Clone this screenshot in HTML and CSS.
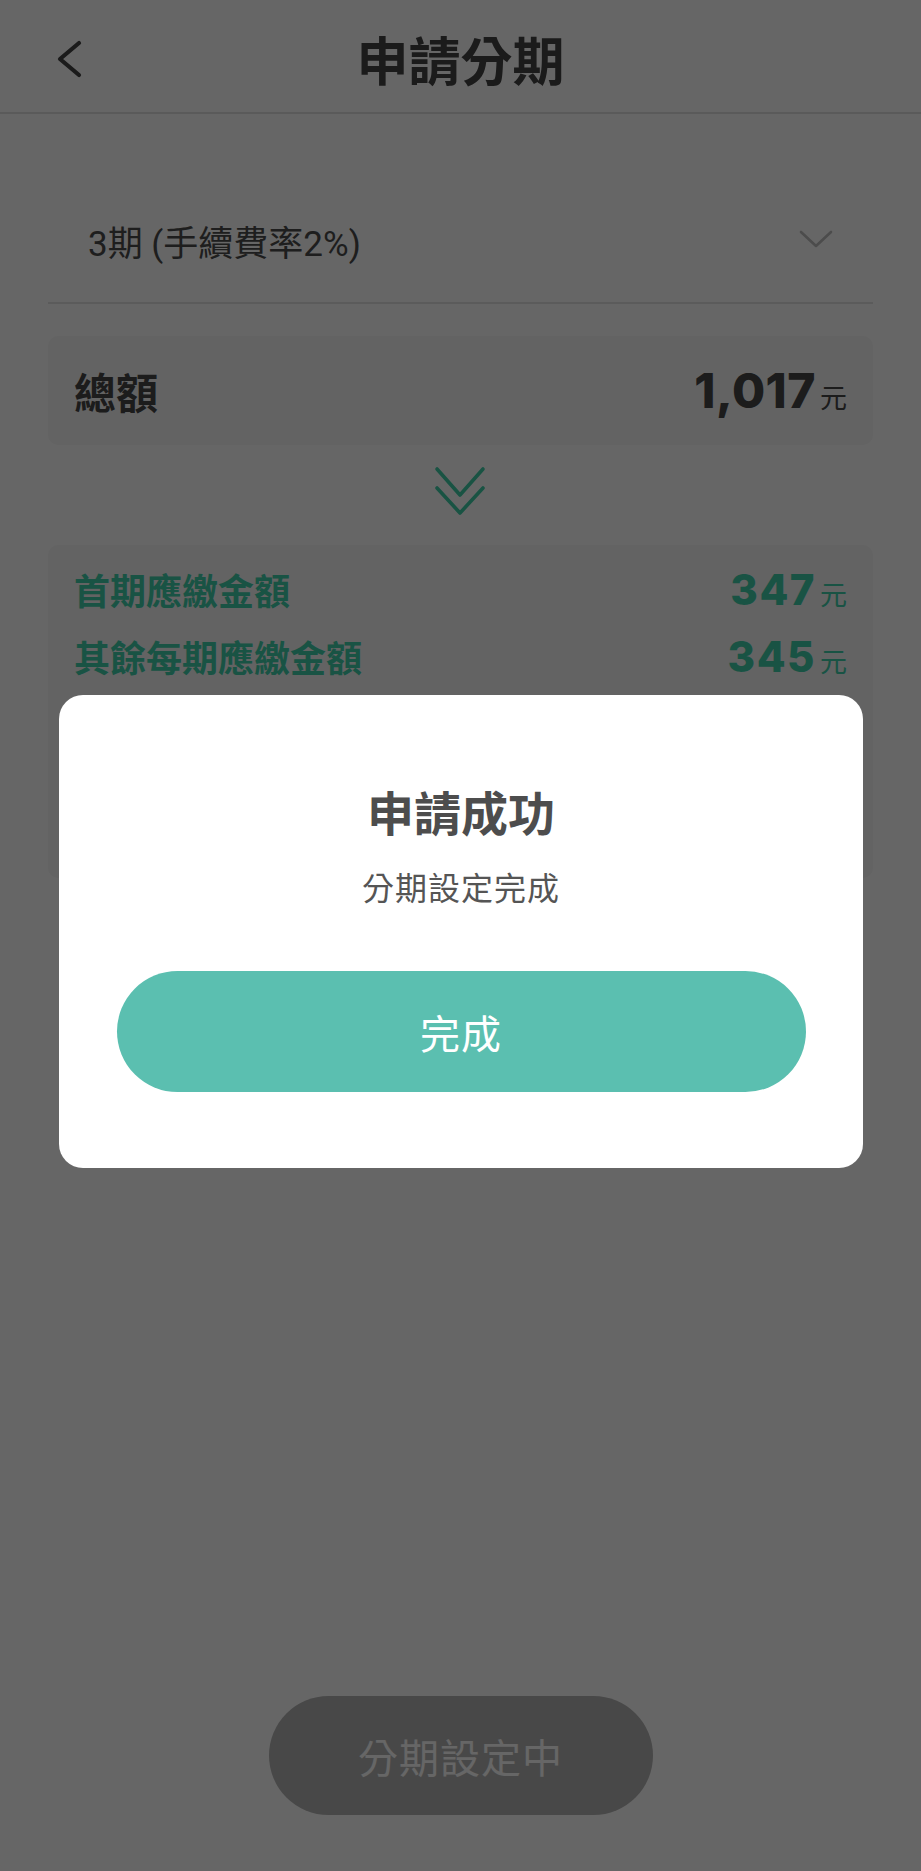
FILE: index.html
```html
<!DOCTYPE html>
<html lang="zh-Hant">
<head>
<meta charset="utf-8">
<title>申請分期</title>
<link rel="stylesheet" href="styles.css">
</head>
<body>
<div class="page">
  <header class="topbar">
    <div class="topbar-left">
      <svg class="back-icon" width="30" height="40" viewBox="0 0 30 40" aria-hidden="true">
        <polyline points="25,4 6,20 25,36" fill="none" stroke="#444" stroke-width="4.2" stroke-linecap="round" stroke-linejoin="round"/>
      </svg>
    </div>
    <h1 class="topbar-title">申請分期</h1>
    <div class="topbar-right"></div>
  </header>

  <main class="content">
    <div class="select">
      <span class="select-text">3期 (手續費率2%)</span>
      <svg class="select-caret" width="34" height="20" viewBox="0 0 34 20" aria-hidden="true">
        <polyline points="2,3 17,17 32,3" fill="none" stroke="#bdbdbd" stroke-width="2.6" stroke-linecap="round" stroke-linejoin="round"/>
      </svg>
    </div>

    <section class="card card-total">
      <span class="total-label">總額</span>
      <span class="amount amount-dark"><span class="num num-lg">1,017</span><span class="unit">元</span></span>
    </section>

    <div class="arrow">
      <svg width="52" height="50" viewBox="0 0 52 50" aria-hidden="true">
        <polyline points="3,3 26,29 49,3" fill="none" stroke="#3fcfa9" stroke-width="3.6" stroke-linecap="round" stroke-linejoin="round"/>
        <polyline points="3,22 26,47 49,22" fill="none" stroke="#3fcfa9" stroke-width="3.6" stroke-linecap="round" stroke-linejoin="round"/>
      </svg>
    </div>

    <section class="card card-result">
      <div class="row">
        <span class="row-label">首期應繳金額</span>
        <span class="amount amount-green"><span class="num num-md">347</span><span class="unit">元</span></span>
      </div>
      <div class="row">
        <span class="row-label">其餘每期應繳金額</span>
        <span class="amount amount-green"><span class="num num-md">345</span><span class="unit">元</span></span>
      </div>
    </section>
  </main>

  <footer class="footer">
    <button class="btn-pending" type="button">分期設定中</button>
  </footer>
</div>

<div class="overlay">
  <div class="modal">
    <h2 class="modal-title">申請成功</h2>
    <p class="modal-text">分期設定完成</p>
    <button class="btn-done" type="button">完成</button>
  </div>
</div>
</body>
</html>
```

FILE: styles.css
```css
* {
  box-sizing: border-box;
}

html, body {
  margin: 0;
  padding: 0;
}

body {
  background: #ffffff;
  font-family: "Noto Sans CJK TC", "Noto Sans", sans-serif;
  color: #444;
}

.page {
  min-height: 100vh;
  display: flex;
  flex-direction: column;
}

/* Header */
.topbar {
  height: 114px;
  display: grid;
  grid-template-columns: 1fr auto 1fr;
  align-items: start;
  border-bottom: 2px solid #e2e2e2;
}

.topbar-left {
  padding-left: 54px;
  padding-top: 39px;
  display: flex;
}

.back-icon {
  display: block;
}

.topbar-title {
  margin: 0;
  padding-top: 25px;
  font-size: 52px;
  line-height: 68px;
  font-weight: 700;
  color: #454545;
  letter-spacing: 0;
}

/* Content */
.content {
  display: flex;
  flex-direction: column;
  padding: 0 48px;
}

.select {
  display: flex;
  align-items: center;
  justify-content: space-between;
  padding: 107px 40px 33px 40px;
  border-bottom: 2px solid #e4e4e4;
}

.select-text {
  font-family: "Roboto", "Noto Sans CJK TC", sans-serif;
  font-size: 35px;
  line-height: 48px;
  color: #4c4c4c;
}

.select-caret {
  display: block;
  margin-bottom: 12px;
}

.card {
  background: #f7f7f7;
  border-radius: 10px;
}

.card-total {
  margin-top: 32px;
  height: 109px;
  display: flex;
  align-items: center;
  justify-content: space-between;
  padding: 0 26px 0 26px;
}

.total-label {
  font-size: 42px;
  font-weight: 700;
  color: #464646;
  line-height: 56px;
}

.amount {
  display: flex;
  align-items: baseline;
}

.num {
  font-family: "Inter", "Lato", sans-serif;
  font-weight: 800;
}

.num-lg {
  font-size: 48px;
  letter-spacing: 0.5px;
}

.num-md {
  font-size: 42px;
  letter-spacing: 1.5px;
}

.unit {
  font-size: 27px;
  margin-left: 4px;
}

.amount-dark {
  color: #464646;
}

.amount-green {
  color: #40cfaa;
}

.arrow {
  display: flex;
  justify-content: center;
  padding: 21px 2px 29px 0;
}

.arrow svg {
  display: block;
}

.card-result {
  height: 333px;
  padding: 19px 26px 0 26px;
  display: flex;
  flex-direction: column;
  gap: 17px;
}

.row {
  display: flex;
  align-items: baseline;
  justify-content: space-between;
  height: 50px;
}

.row-label {
  font-size: 36px;
  font-weight: 700;
  color: #40cfaa;
  line-height: 50px;
}

/* Footer */
.footer {
  margin-top: auto;
  display: flex;
  justify-content: center;
  padding: 0 0 56px 0;
}

.btn-pending {
  width: 384px;
  height: 119px;
  border: none;
  border-radius: 60px;
  background: #b4b4b4;
  color: #ffffff;
  font-family: "Noto Sans CJK TC", sans-serif;
  font-size: 40px;
  letter-spacing: 1px;
}

/* Modal overlay */
.overlay {
  position: fixed;
  inset: 0;
  background: rgba(0, 0, 0, 0.6);
  display: flex;
  align-items: center;
  justify-content: center;
  padding-bottom: 8px;
}

.modal {
  width: 804px;
  height: 473px;
  background: #ffffff;
  border-radius: 24px;
  display: flex;
  flex-direction: column;
  align-items: center;
  padding: 86px 57px 76px 58px;
}

.modal-title {
  margin: 0;
  font-size: 47px;
  line-height: 60px;
  font-weight: 700;
  color: #4d4d4d;
}

.modal-text {
  margin: 23px 0 0 0;
  font-size: 32px;
  line-height: 44px;
  color: #555;
  letter-spacing: 1px;
}

.btn-done {
  margin-top: auto;
  width: 100%;
  height: 121px;
  border: none;
  border-radius: 61px;
  background: #5bbfb0;
  color: #ffffff;
  font-family: "Noto Sans CJK TC", sans-serif;
  font-size: 40px;
  letter-spacing: 1px;
}
```
